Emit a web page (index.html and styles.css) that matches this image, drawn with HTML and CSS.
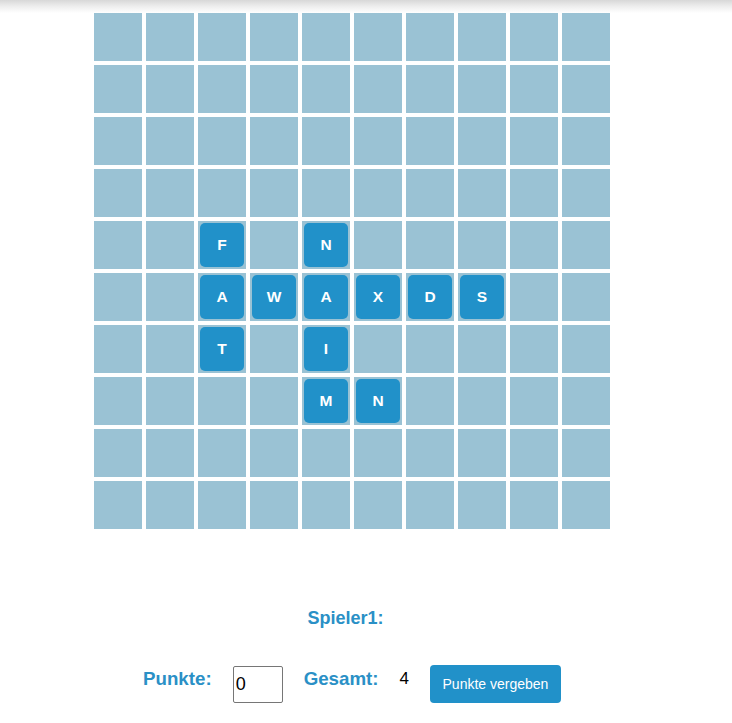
FILE: index.html
```html
<!DOCTYPE html>
<html lang="de">
<head>
<meta charset="utf-8">
<title>Spielbrett</title>
<link rel="stylesheet" href="styles.css">
</head>
<body>
<div class="topbar"></div>
<main class="page">
  <div class="board">
    <div class="cell"></div><div class="cell"></div><div class="cell"></div><div class="cell"></div><div class="cell"></div><div class="cell"></div><div class="cell"></div><div class="cell"></div><div class="cell"></div><div class="cell"></div>
    <div class="cell"></div><div class="cell"></div><div class="cell"></div><div class="cell"></div><div class="cell"></div><div class="cell"></div><div class="cell"></div><div class="cell"></div><div class="cell"></div><div class="cell"></div>
    <div class="cell"></div><div class="cell"></div><div class="cell"></div><div class="cell"></div><div class="cell"></div><div class="cell"></div><div class="cell"></div><div class="cell"></div><div class="cell"></div><div class="cell"></div>
    <div class="cell"></div><div class="cell"></div><div class="cell"></div><div class="cell"></div><div class="cell"></div><div class="cell"></div><div class="cell"></div><div class="cell"></div><div class="cell"></div><div class="cell"></div>
    <div class="cell"></div><div class="cell"></div><div class="cell"><span class="tile">F</span></div><div class="cell"></div><div class="cell"><span class="tile">N</span></div><div class="cell"></div><div class="cell"></div><div class="cell"></div><div class="cell"></div><div class="cell"></div>
    <div class="cell"></div><div class="cell"></div><div class="cell"><span class="tile">A</span></div><div class="cell"><span class="tile">W</span></div><div class="cell"><span class="tile">A</span></div><div class="cell"><span class="tile">X</span></div><div class="cell"><span class="tile">D</span></div><div class="cell"><span class="tile">S</span></div><div class="cell"></div><div class="cell"></div>
    <div class="cell"></div><div class="cell"></div><div class="cell"><span class="tile">T</span></div><div class="cell"></div><div class="cell"><span class="tile">I</span></div><div class="cell"></div><div class="cell"></div><div class="cell"></div><div class="cell"></div><div class="cell"></div>
    <div class="cell"></div><div class="cell"></div><div class="cell"></div><div class="cell"></div><div class="cell"><span class="tile">M</span></div><div class="cell"><span class="tile">N</span></div><div class="cell"></div><div class="cell"></div><div class="cell"></div><div class="cell"></div>
    <div class="cell"></div><div class="cell"></div><div class="cell"></div><div class="cell"></div><div class="cell"></div><div class="cell"></div><div class="cell"></div><div class="cell"></div><div class="cell"></div><div class="cell"></div>
    <div class="cell"></div><div class="cell"></div><div class="cell"></div><div class="cell"></div><div class="cell"></div><div class="cell"></div><div class="cell"></div><div class="cell"></div><div class="cell"></div><div class="cell"></div>
  </div>

  <h3 class="player">Spieler1:</h3>

  <div class="score-row">
    <h3 class="label">Punkte:</h3>
    <input class="points-input" type="text" value="0">
    <h3 class="label">Gesamt:</h3>
    <span class="total">4</span>
    <button class="award-btn" type="button">Punkte vergeben</button>
  </div>
</main>
</body>
</html>
```

FILE: styles.css
```css
html, body {
  margin: 0;
  padding: 0;
  background: #ffffff;
  font-family: "Liberation Sans", Arial, sans-serif;
}

.topbar {
  height: 13px;
  background: linear-gradient(to bottom, #d8d8d8 0%, #eeeeee 50%, #ffffff 100%);
}

.page {
  width: 704px;
  display: flex;
  flex-direction: column;
  align-items: center;
}

.board {
  display: grid;
  grid-template-columns: repeat(10, 48px);
  grid-auto-rows: 48px;
  gap: 4px;
}

.cell {
  background: #9ac2d4;
  padding: 2px;
  box-sizing: border-box;
  display: flex;
}

.tile {
  flex: 1;
  display: flex;
  align-items: center;
  justify-content: center;
  background: #2191c9;
  border-radius: 5px;
  color: #ffffff;
  font-weight: bold;
  font-size: 15.5px;
}

.player {
  margin: 79px 0 0;
  padding-right: 13px;
  font-size: 18px;
  line-height: 21px;
  font-weight: bold;
  color: #2a90c6;
}

.score-row {
  margin-top: 36px;
  display: flex;
  align-items: center;
  gap: 21px;
}

.label {
  margin: 0 0 11px;
  font-size: 18.72px;
  line-height: 21px;
  font-weight: bold;
  color: #2a90c6;
}

.points-input {
  width: 50px;
  height: 37px;
  box-sizing: border-box;
  margin: 0;
  padding: 0 2px;
  border: 1px solid #767676;
  border-radius: 2px;
  font-family: "Liberation Sans", Arial, sans-serif;
  font-size: 18px;
  color: #000000;
}

.total {
  margin-bottom: 11px;
  font-size: 17px;
  line-height: 21px;
  color: #000000;
}

.award-btn {
  width: 131px;
  height: 38px;
  margin: 0;
  padding: 0;
  border: none;
  border-radius: 4px;
  background: #2191c9;
  color: #ffffff;
  font-family: "Liberation Sans", Arial, sans-serif;
  font-size: 14px;
}
```
